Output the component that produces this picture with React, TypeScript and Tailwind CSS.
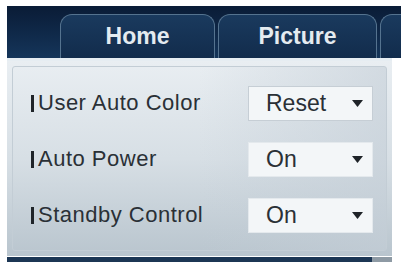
const rows = [
  { label: "User Auto Color", value: "Reset", bordered: true },
  { label: "Auto Power", value: "On", bordered: false },
  { label: "Standby Control", value: "On", bordered: false },
];

function Arrow() {
  return (
    <svg width="11" height="7" viewBox="0 0 11 7" className="shrink-0">
      <path d="M0 0 H11 L5.5 7 Z" fill="#1e2328" />
    </svg>
  );
}

export default function App() {
  return (
    <div className="relative w-[401px] h-[262px] overflow-hidden bg-white font-['Liberation_Sans',Arial,sans-serif]">
      {/* header strip with tabs */}
      <div className="ml-[7px] mt-[6px] h-[52px] flex items-end gap-[3px] pl-[53px] bg-gradient-to-b from-[#0a1c36] via-[#0f2848] to-[#15355a]">
        <div className="w-[155px] h-[44px] shrink-0 rounded-t-[12px] border border-b-0 border-[#55738f] bg-gradient-to-b from-[#1a3a5e] to-[#122c4c] flex items-center justify-center">
          <span className="text-[23px] font-bold text-[#e4ebf0] leading-none">Home</span>
        </div>
        <div className="w-[159px] h-[44px] shrink-0 rounded-t-[12px] border border-b-0 border-[#55738f] bg-gradient-to-b from-[#1a3a5e] to-[#122c4c] flex items-center justify-center">
          <span className="text-[23px] font-bold text-[#e4ebf0] leading-none">Picture</span>
        </div>
        <div className="w-[40px] h-[44px] shrink-0 rounded-tl-[12px] border border-b-0 border-r-0 border-[#55738f] bg-gradient-to-b from-[#1a3a5e] to-[#122c4c]" />
      </div>

      {/* panel */}
      <div className="ml-[7px] w-[385px] h-[198px] border-t-[3px] border-[#e6edf2] bg-gradient-to-b from-[#e9eef2] via-[#d7dfe5] to-[#b9c5ce] p-[5px]">
        <div className="h-full rounded-[3px] border border-[#c3cdd5] bg-gradient-to-r from-transparent via-transparent to-[#c4ced7]/60 pt-[8px]">
          {rows.map((r) => (
            <div key={r.label} className="h-[56px] flex items-center">
              <div className="w-[235px] flex items-center pl-[18px]">
                <span className="w-[3px] h-[17px] bg-[#1f2429] mr-[4px]" />
                <span className="text-[22px] tracking-[0.5px] text-[#2a3036] leading-none">{r.label}</span>
              </div>
              <div
                className={
                  "w-[125px] h-[35px] flex items-center justify-between pl-[17px] pr-[9px] bg-[#f3f6f8] " +
                  (r.bordered ? "border border-[#c6ced5]" : "border border-[#e4e9ed]")
                }
              >
                <span className="text-[23px] text-[#2a3036] leading-none">{r.value}</span>
                <Arrow />
              </div>
            </div>
          ))}
        </div>
      </div>

      {/* bottom dark band */}
      <div className="ml-[7px] mt-[1px] flex h-[6px]">
        <div className="w-[365px] bg-[#1c3654]" />
        <div className="w-[20px] bg-[#8e9aa4]" />
      </div>
    </div>
  );
}
